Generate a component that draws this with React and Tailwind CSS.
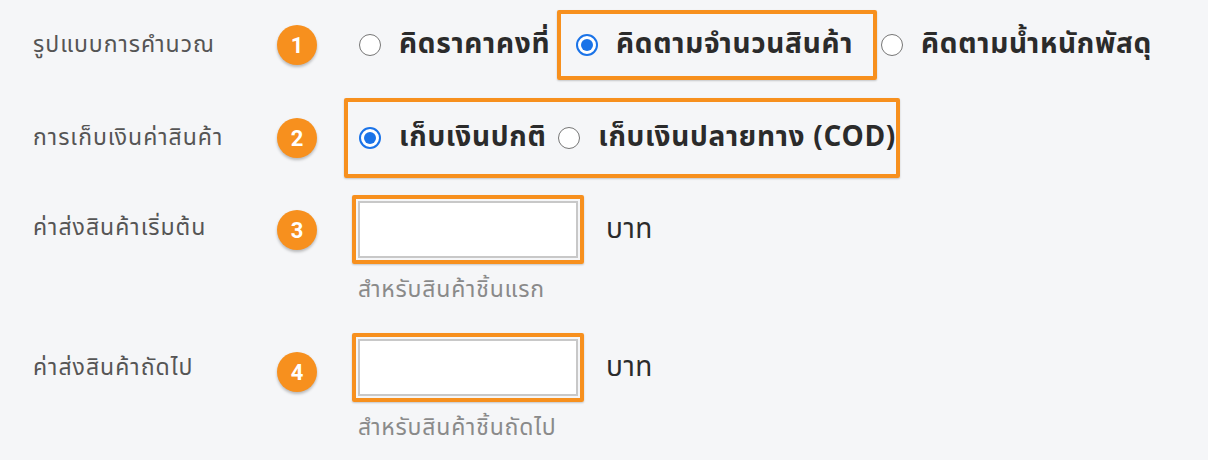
import React from 'react';

const Badge = ({ n }) => (
  <div className="w-10 h-10 rounded-full bg-[#f7901e] text-white font-bold text-[22px] flex items-center justify-center shadow-[0_2px_3px_rgba(0,0,0,0.25)] shrink-0 font-['Roboto',sans-serif]">
    {n}
  </div>
);

const Radio = ({ checked }) =>
  checked ? (
    <span className="w-[22px] h-[22px] rounded-full border-2 border-[#1a73e8] bg-white flex items-center justify-center shrink-0">
      <span className="w-[12px] h-[12px] rounded-full bg-[#1a73e8]" />
    </span>
  ) : (
    <span className="w-[22px] h-[22px] rounded-full border-[1.5px] border-[#767676] bg-white shrink-0" />
  );

const Option = ({ checked, label, className = '' }) => (
  <div className={`flex items-center gap-[18px] ${className}`}>
    <Radio checked={checked} />
    <span className="text-[28px] font-bold text-[#2b2b2b] whitespace-nowrap tracking-[0.7px]">{label}</span>
  </div>
);

const AmountField = ({ hint }) => (
  <div className="flex flex-col">
    <div className="flex items-center">
      <div className="w-[232px] h-[69px] border-4 border-[#f7901e] rounded-[2px] p-[2px] shadow-[0_1px_2px_rgba(0,0,0,0.2)]">
        <div className="w-full h-full bg-white border-2 border-[#c8c8c8]" />
      </div>
      <span className="ml-[22px] text-[28px] text-[#2b2b2b] tracking-[0.5px]">บาท</span>
    </div>
    <p className="ml-[6px] mt-[11px] text-[23px] leading-[30px] text-[#8a8a8a] tracking-[0.8px]">{hint}</p>
  </div>
);

export default function App() {
  return (
    <div className="w-[1208px] h-[460px] bg-[#f5f6f8] px-[33px] pt-[10px] font-['Noto_Sans_Thai','Noto_Sans',sans-serif] overflow-hidden">
      {/* row 1 */}
      <div className="flex items-center h-[70px]">
        <div className="w-[244px] text-[23px] text-[#555] tracking-[1px]">รูปแบบการคำนวณ</div>
        <Badge n="1" />
        <Option className="ml-[42px] w-[194px]" label="คิดราคาคงที่" />
        <div className="ml-[4px] w-[320px] h-[70px] border-4 border-[#f7901e] rounded-[2px] pl-[15px] flex items-center shadow-[0_1px_2px_rgba(0,0,0,0.2)]">
          <Option checked label="คิดตามจำนวนสินค้า" />
        </div>
        <Option className="ml-[4px]" label="คิดตามน้ำหนักพัสดุ" />
      </div>

      {/* row 2 */}
      <div className="flex items-center h-[80px] mt-[18px]">
        <div className="w-[244px] text-[23px] text-[#555] tracking-[1px]">การเก็บเงินค่าสินค้า</div>
        <Badge n="2" />
        <div className="ml-[27px] w-[556px] h-[80px] border-4 border-[#f7901e] rounded-[2px] pl-[11px] flex items-center shadow-[0_1px_2px_rgba(0,0,0,0.2)]">
          <Option checked className="w-[203px]" label="เก็บเงินปกติ" />
          <Option label="เก็บเงินปลายทาง (COD)" />
        </div>
      </div>

      {/* row 3 */}
      <div className="flex items-start mt-[17px]">
        <div className="w-[244px] text-[23px] leading-[30px] text-[#555] mt-[18px] tracking-[1px]">ค่าส่งสินค้าเริ่มต้น</div>
        <div className="mt-[15px]"><Badge n="3" /></div>
        <div className="ml-[35px]">
          <AmountField hint="สำหรับสินค้าชิ้นแรก" />
        </div>
      </div>

      {/* row 4 */}
      <div className="flex items-start mt-[28px]">
        <div className="w-[244px] text-[23px] leading-[30px] text-[#555] mt-[20px] tracking-[1px]">ค่าส่งสินค้าถัดไป</div>
        <div className="mt-[19px]"><Badge n="4" /></div>
        <div className="ml-[35px]">
          <AmountField hint="สำหรับสินค้าชิ้นถัดไป" />
        </div>
      </div>
    </div>
  );
}
